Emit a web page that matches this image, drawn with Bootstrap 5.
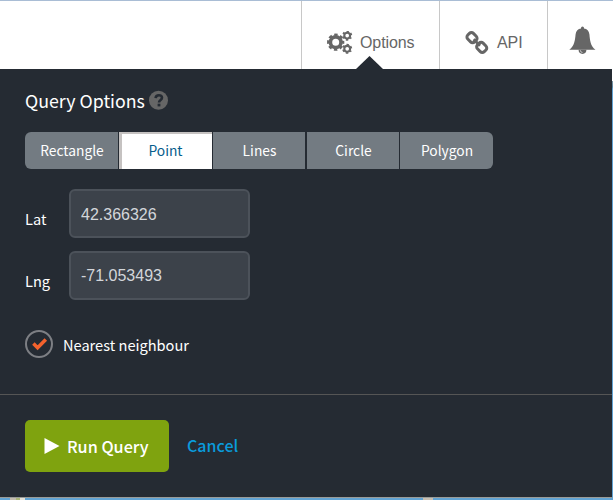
<!DOCTYPE html>
<html lang="en">
<head>
<meta charset="utf-8">
<title>Query Options</title>
<link href="https://cdn.jsdelivr.net/npm/bootstrap@5.3.0/dist/css/bootstrap.min.css" rel="stylesheet">
<style>
body{width:613px;height:500px;overflow:hidden;background:linear-gradient(#fff 81px,#7e98a6 81px,#5d86a0 87px,#62a4d4 89px);font-family:"Noto Sans CJK SC","Source Sans Pro",sans-serif;font-size:14.6px;line-height:20px;color:#fff}
.topbar{height:69px;border-top:1px solid #a9bdd5;background:#fff;font:16px/20px "Liberation Sans",Arial,sans-serif;color:#666}
.top-item{border-left:1px solid #c8c8c8;position:relative}
.w-options{width:138px;padding:30px 0 0 25px}
.w-api{width:108px;padding:29px 0 0 25px}
.w-bell{width:66px;padding:25px 0 0 21px}
.opt-text{margin:2px 0 0 7px;letter-spacing:-.1px}
.api-text{margin:3px 0 0 6px;letter-spacing:-.1px}
.pointer{position:absolute;left:54px;bottom:0}
.panel{width:612px;height:429px;background:#252b33;border-bottom:1px solid #999b98}
.panel-main{height:325px;padding:19px 25px 0}
.panel-title{font-size:17.8px;line-height:24px;font-weight:400;height:24px}
.tabs{height:37px;margin-top:20px;width:468px;border-radius:6px;overflow:hidden}
.tabs .tab{width:93px;border:0;border-radius:0;padding:0 0 2px 1px;background:#737b82;color:#fff;font-size:13.8px;line-height:20px}
.tabs .tab-first,.tabs .tab-on{width:94px}
.tabs .tab-first,.tabs .tab-on,.tabs .tab-circle{border-right:1px solid #252b33}
.tabs .tab-lines{width:94px;border-right:2px solid #252b33}
.tabs .tab-on{background:#fff;color:#075d8c;box-shadow:inset 3px 2px 0 #c5c2c1;padding-left:0}
.field-lat{margin-top:20px}
.field-lng{margin-top:13px}
.field-row{height:49px}
.field-row label{width:44px;padding-top:20px}
.field-row .form-control{width:181px;height:49px;background:#3c424a;border:2px solid #4c525a;border-radius:6px;color:#d3d6da;font:16px/20px "Liberation Sans",Arial,sans-serif;padding:0 10px}
.field-lat .form-control{padding-top:2px}
.check-row{margin-top:30px;height:28px}
.check-text{margin:2px 0 0 10px}
.panel-foot{height:103px;border-top:1px solid #555;padding:25px 25px 0}
.run{width:144px;height:52px;background:#7fa30f;border:0;border-radius:5px;color:#fff;font-weight:500;font-size:16.2px;line-height:24px;padding:0 0 0 19px}
.run-text{margin:-1px 0 0 7px}
.cancel{color:#0a9bdc;font-weight:500;font-size:16px;line-height:24px;margin:13px 0 0 18px}
.map{height:2px;background:linear-gradient(90deg,transparent 10px,#c3bcb0 10px,#c3bcb0 16px,#a9b578 16px,#a9b578 20px,#e4e2da 20px,#e4e2da 25px,transparent 25px,transparent 423px,#c8bfb2 423px,#c8bfb2 433px,transparent 433px)}
</style>
</head>
<body>
<header class="topbar d-flex justify-content-end">
  <div class="top-item w-options d-flex align-items-start">
    <svg width="26" height="24" viewBox="0 0 26 24" fill="none" stroke="#666">
      <circle cx="8.7" cy="11.2" r="5.3" stroke-width="3.6"/>
      <circle cx="8.7" cy="11.2" r="7.5" stroke-width="2.3" stroke-dasharray="3.4 2.49" stroke-dashoffset="1.7"/>
      <circle cx="20.2" cy="4.6" r="2.9" stroke-width="2.1"/>
      <circle cx="20.2" cy="4.6" r="4.2" stroke-width="1.7" stroke-dasharray="2.2 2.198" stroke-dashoffset="1.1" transform="rotate(30 20.2 4.6)"/>
      <circle cx="20.2" cy="17.8" r="2.9" stroke-width="2.1"/>
      <circle cx="20.2" cy="17.8" r="4.2" stroke-width="1.7" stroke-dasharray="2.2 2.198" stroke-dashoffset="1.1" transform="rotate(30 20.2 17.8)"/>
    </svg>
    <span class="opt-text">Options</span>
    <svg class="pointer" width="27" height="13"><path d="M0 13 13.5 0 27 13Z" fill="#252b33"/></svg>
  </div>
  <div class="top-item w-api d-flex align-items-start">
    <svg width="26" height="26" viewBox="0 0 26 26" fill="none" stroke="#666" stroke-width="3">
      <rect x="-4.8" y="-4" width="9.6" height="8" rx="2.8" transform="translate(7 7.6) rotate(45)"/>
      <rect x="-4.8" y="-4" width="9.6" height="8" rx="2.8" transform="translate(16.7 17.4) rotate(45)"/>
      <path d="m8.600 9.300 6.400 6.400" stroke-width="2.8"/>
    </svg>
    <span class="api-text">API</span>
  </div>
  <div class="top-item w-bell">
    <svg class="d-block" width="27" height="29" viewBox="0 0 27 29" fill="#666">
      <path d="M12 2.600V1.900a1.500 1.500 0 0 1 3 0V2.600c3 .5 5 2.300 5.400 5.600.7 6.600.8 11 6.100 15.600H.3C5.600 19.200 5.900 14.800 6.600 8.200 7 4.900 9 3.100 12 2.600Z"/>
      <path d="M9.600 23.800a3.900 4.100 0 0 0 7.800 0Z"/>
      <path d="M11.300 24.200a2.200 2.500 0 0 0 2.200 2.300" fill="none" stroke="#fff" stroke-width=".6"/>
    </svg>
  </div>
</header>
<main class="panel">
  <section class="panel-main">
    <h1 class="panel-title d-flex mb-0"><span>Query Options</span>
      <svg class="ms-1" width="20" height="24" viewBox="0 0 20 24"><circle cx="9.500" cy="12.300" r="9.500" fill="#666"/><path d="M6.600 10.200c.3-4.100 6.400-3.700 6.400-.4 0 2.200-3 2.100-3 4.800" fill="none" stroke="#252b33" stroke-width="2.600"/><path d="M8.600 15.700h2.800v2.700H8.600Z" fill="#252b33"/></svg>
    </h1>
    <div class="tabs d-flex">
      <button class="btn tab tab-first">Rectangle</button>
      <button class="btn tab tab-on">Point</button>
      <button class="btn tab tab-lines">Lines</button>
      <button class="btn tab tab-circle">Circle</button>
      <button class="btn tab">Polygon</button>
    </div>
    <div class="field-row field-lat d-flex"><label for="lat">Lat</label><input id="lat" class="form-control" value="42.366326"></div>
    <div class="field-row field-lng d-flex"><label for="lng">Lng</label><input id="lng" class="form-control" value="-71.053493"></div>
    <div class="check-row d-flex align-items-center">
      <svg width="28" height="28"><circle cx="14" cy="14" r="13" fill="none" stroke="#7d7f84" stroke-width="2"/><path d="m8.400 13.500 4.200 4.200 8.200-8.200" fill="none" stroke="#f4622d" stroke-width="3.500"/></svg>
      <span class="check-text">Nearest neighbour</span>
    </div>
  </section>
  <footer class="panel-foot d-flex align-items-start">
    <button class="btn run d-flex align-items-center"><svg width="16" height="16"><path d="M.5 0 15.500 8 .5 16Z" fill="#fff"/></svg><span class="run-text">Run Query</span></button>
    <a class="cancel text-decoration-none" href="#">Cancel</a>
  </footer>
</main>
<div class="map"></div>
<script src="https://cdn.jsdelivr.net/npm/bootstrap@5.3.0/dist/js/bootstrap.bundle.min.js"></script>
</body>
</html>
